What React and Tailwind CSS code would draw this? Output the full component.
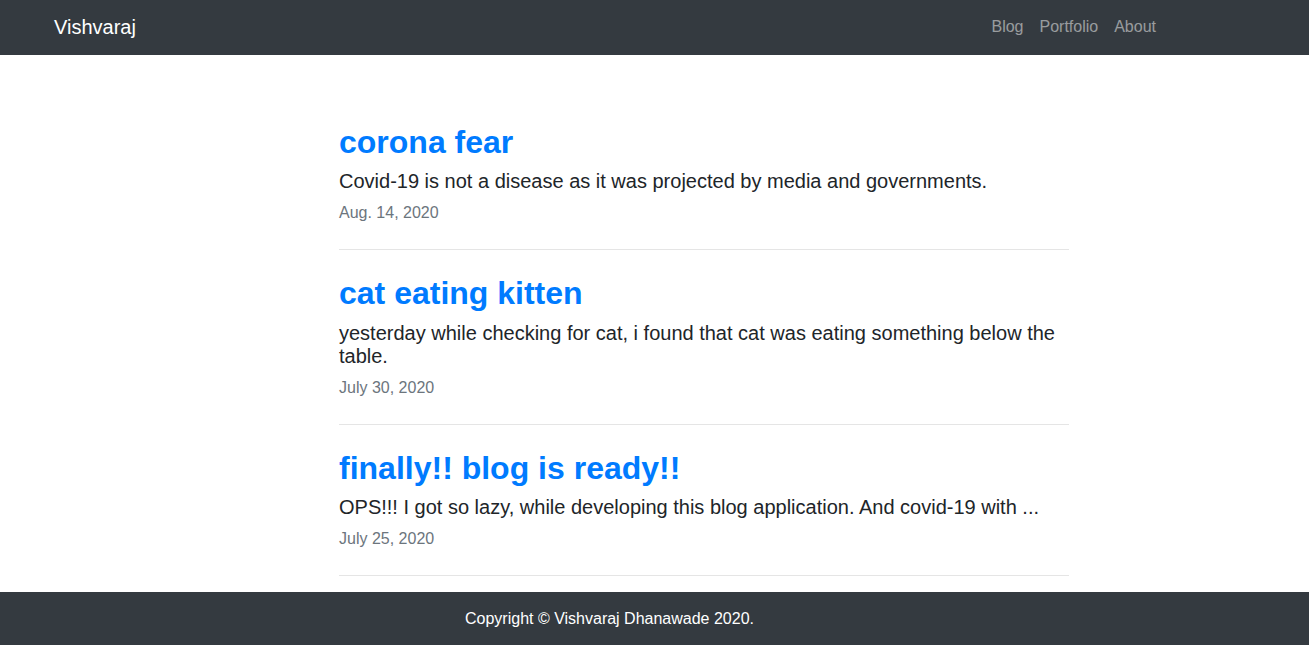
import React from "react";

const posts = [
  {
    title: "corona fear",
    desc: "Covid-19 is not a disease as it was projected by media and governments.",
    date: "Aug. 14, 2020",
  },
  {
    title: "cat eating kitten",
    desc: "yesterday while checking for cat, i found that cat was eating something below the table.",
    date: "July 30, 2020",
  },
  {
    title: "finally!! blog is ready!!",
    desc: "OPS!!! I got so lazy, while developing this blog application. And covid-19 with ...",
    date: "July 25, 2020",
  },
];

export default function App() {
  return (
    <div
      className="min-h-[645px] flex flex-col bg-white"
      style={{ fontFamily: '"Liberation Sans", Arial, sans-serif' }}
    >
      <nav className="h-[55px] bg-[#343a40] flex items-center justify-between pl-[54px] pr-[153px] pb-[2px]">
        <a className="text-[20px] leading-[30px] text-white">Vishvaraj</a>
        <ul className="flex items-center gap-[16px] text-[16px] leading-[24px] text-white/50">
          <li>Blog</li>
          <li>Portfolio</li>
          <li>About</li>
        </ul>
      </nav>
      <main className="flex-1 pt-[68px] pl-[339px]">
        <div className="w-[730px]">
          {posts.map((p, i) => (
            <div key={i} className={i === 0 ? "" : "mt-[24px]"}>
              <h2 className="text-[32px] leading-[1.2] font-bold text-[#007bff] mb-2">
                {p.title}
              </h2>
              <p className="pt-[1px] text-[20px] leading-[23px] text-[#212529] mb-[7px]">
                {p.desc}
              </p>
              <p className="pt-[1px] text-[16px] leading-[24px] text-[#6c757d]">{p.date}</p>
              <hr className="mt-[24px] border-0 border-t border-[#e5e5e5]" />
            </div>
          ))}
        </div>
      </main>
      <footer className="mt-[16px] h-[53px] bg-[#343a40] flex items-center pl-[465px] pt-[1px]">
        <p className="text-[16px] leading-[24px] text-white">
          Copyright © Vishvaraj Dhanawade 2020.
        </p>
      </footer>
    </div>
  );
}
